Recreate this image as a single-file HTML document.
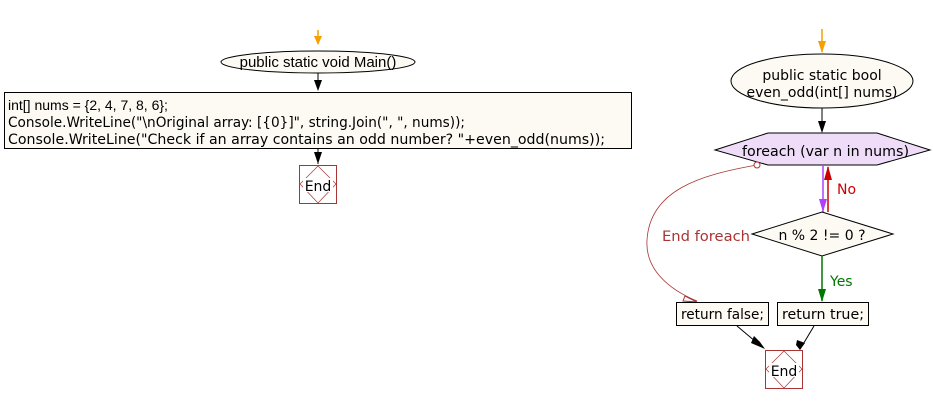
<!DOCTYPE html>
<html><head><meta charset="utf-8"><style>
html,body{margin:0;padding:0;background:#fff;width:933px;height:404px;overflow:hidden}
svg text{font-family:"DejaVu Sans","Liberation Sans",sans-serif;font-size:13px}
</style></head><body>
<svg width="933" height="404" xmlns="http://www.w3.org/2000/svg">
<line x1="318" y1="30" x2="318" y2="44" stroke="#f5a000" stroke-width="1.5"/>
<polygon points="314,36 322,36 318,45" fill="#f5a000"/>
<ellipse cx="318" cy="62" rx="97" ry="11" fill="#fdfaf4" stroke="#000"/>
<text x="318" y="67" text-anchor="middle" style="font-family:'Liberation Sans',sans-serif;font-size:15px">public static void Main()</text>
<line x1="318" y1="73" x2="318" y2="90" stroke="#000"/>
<polygon points="314,80 322,80 318,91" fill="#000"/>
<rect x="4.5" y="92.5" width="627" height="56" fill="#fdfaf4" stroke="#000"/>
<text x="8" y="110" style="font-family:'Liberation Sans',sans-serif;font-size:14px">int[] nums = {2, 4, 7, 8, 6};</text>
<text x="8" y="127" textLength="457" lengthAdjust="spacingAndGlyphs" style="font-family:'DejaVu Sans Condensed','DejaVu Sans',sans-serif;font-size:14px">Console.WriteLine("\nOriginal array: [{0}]", string.Join(", ", nums));</text>
<text x="8" y="144" textLength="597" lengthAdjust="spacingAndGlyphs" style="font-family:'DejaVu Sans Condensed','DejaVu Sans',sans-serif;font-size:14px">Console.WriteLine("Check if an array contains an odd number? "+even_odd(nums));</text>
<line x1="318" y1="149" x2="318" y2="164" stroke="#000"/>
<polygon points="314,152 322,152 318,164" fill="#000"/>
<rect x="299.5" y="165.5" width="37" height="38" fill="#fff" stroke="#a33"/>
<polygon points="318,166 336,184 318,203 300,184" fill="none" stroke="#a33" stroke-width="0.7"/>
<rect x="303" y="178" width="30" height="14" fill="#fff"/>
<text x="318" y="191" text-anchor="middle" style="font-size:14px">End</text>
<line x1="822" y1="29" x2="822" y2="52" stroke="#f5a000" stroke-width="1.5"/>
<polygon points="818,41 826,41 822,53" fill="#f5a000"/>
<ellipse cx="822" cy="81" rx="91" ry="27" fill="#fdfaf4" stroke="#000"/>
<text x="822" y="80" text-anchor="middle" style="font-size:14px">public static bool</text>
<text x="822" y="97" text-anchor="middle" style="font-size:14px">even_odd(int[] nums)</text>
<line x1="822" y1="108" x2="822" y2="132" stroke="#000"/>
<polygon points="818,121 826,121 822,133" fill="#000"/>
<polygon points="715,150 768,133 877,133 930,150 877,165 768,165" fill="#efdcf8" stroke="#000"/>
<text x="742" y="156" textLength="167" lengthAdjust="spacingAndGlyphs" style="font-size:14px">foreach (var n in nums)</text>
<line x1="823" y1="165" x2="823" y2="212" stroke="#b040ff" stroke-width="1.5"/>
<polygon points="819,199 827,199 823,212" fill="#b040ff"/>
<line x1="828" y1="212" x2="828" y2="167" stroke="#c00" stroke-width="1.5"/>
<polygon points="824,180 832,180 828,166" fill="#c00"/>
<text x="837" y="194" fill="#c00" style="font-size:14px">No</text>
<polygon points="822,212 893,234 822,256 752,234" fill="#fdfaf4" stroke="#000"/>
<text x="822" y="240" text-anchor="middle" style="font-size:14px">n % 2 != 0 ?</text>
<text x="662" y="241" fill="#a33" textLength="88" lengthAdjust="spacingAndGlyphs" style="font-size:14px">End foreach</text>
<path d="M757,165 C700,175 650,190 647,240 C645,270 670,290 697,301" fill="none" stroke="#a33" stroke-width="0.8"/>
<circle cx="757" cy="165" r="3" fill="#fff" stroke="#a33"/>
<polygon points="697,302 685,296 683,301" fill="#fff" stroke="#a33"/>
<line x1="822" y1="256" x2="822" y2="301" stroke="#070" stroke-width="1.5"/>
<polygon points="818,289 826,289 822,302" fill="#070"/>
<text x="830" y="286" fill="#070" style="font-size:14px">Yes</text>
<rect x="676.5" y="302.5" width="92" height="23" fill="#fdfaf4" stroke="#000"/>
<text x="681" y="319" textLength="83" lengthAdjust="spacingAndGlyphs" style="font-size:14px">return false;</text>
<rect x="777.5" y="302.5" width="91" height="23" fill="#fdfaf4" stroke="#000"/>
<text x="782" y="319" textLength="82" lengthAdjust="spacingAndGlyphs" style="font-size:14px">return true;</text>
<line x1="737" y1="326" x2="762" y2="347" stroke="#000"/>
<polygon points="754,336 760,342 765,349 751,343" fill="#000"/>
<line x1="814" y1="326" x2="802" y2="346" stroke="#000"/>
<polygon points="797,340 805,343 800,350 796,345" fill="#000"/>
<rect x="765.5" y="350.5" width="37" height="38" fill="#fff" stroke="#a33"/>
<polygon points="784,351 802,369 784,388 766,369" fill="none" stroke="#a33" stroke-width="0.7"/>
<rect x="769" y="363" width="30" height="14" fill="#fff"/>
<text x="784" y="376" text-anchor="middle" style="font-size:14px">End</text>
</svg>
</body></html>
